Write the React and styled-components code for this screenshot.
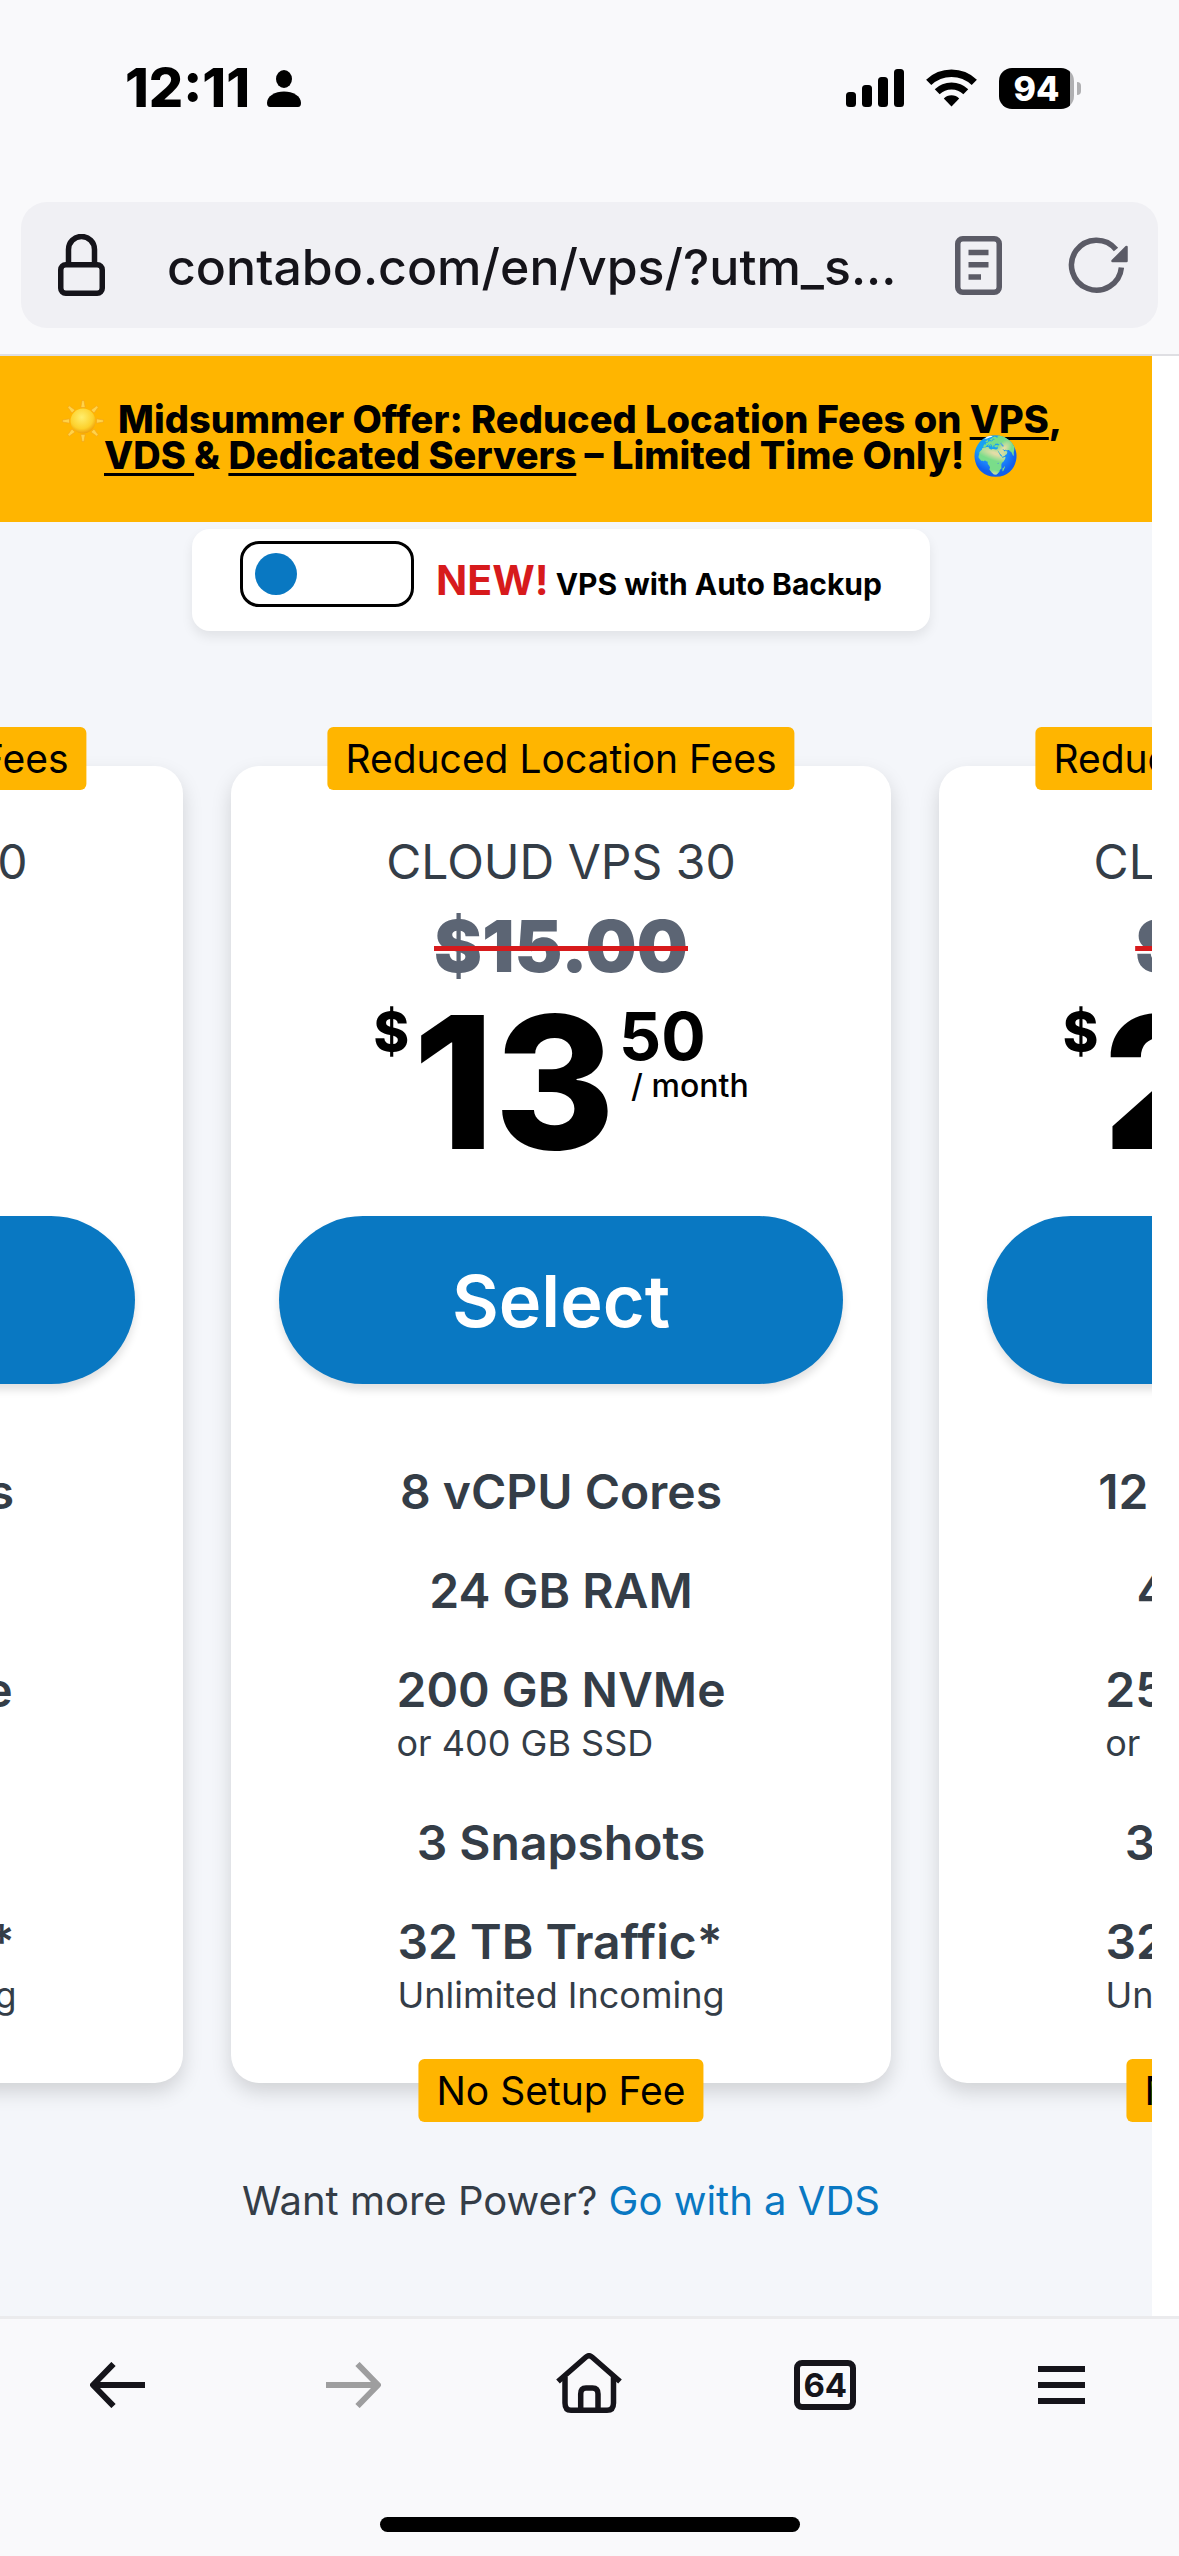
import React, { useState } from "react";
import styled, { createGlobalStyle } from "styled-components";

const color = {
  chrome: "#f9f9fb",
  field: "#f0f0f4",
  ink: "#15141a",
  muted: "#5b5b66",
  page: "#f4f6fa",
  yellow: "#ffb500",
  blue: "#0978c2",
  red: "#d71a1c",
  slate: "#343d47",
  oldPrice: "#5c6574",
};

const GlobalStyle = createGlobalStyle`
  *, *::before, *::after { box-sizing: border-box; }
  body {
    margin: 0;
    background: ${color.chrome};
    font-family: Inter, "Liberation Sans", sans-serif;
    color: #000;
  }
  button, input { font: inherit; color: inherit; }
  svg { display: block; flex: none; }
`;

const Screen = styled.div`
  display: flex;
  flex-direction: column;
  min-height: 100vh;
`;

/* Phone status bar */

const StatusBar = styled.div`
  display: flex;
  align-items: center;
  justify-content: space-between;
  height: 176px;
  padding: 0 98px 0 125px;
`;

const StatusGroup = styled.div`
  display: flex;
  align-items: center;
  gap: ${(p) => p.$gap}px;
`;

const Clock = styled.time`
  font-size: 54px;
  font-weight: 800;
  line-height: 60px;
`;

const Battery = styled.div`
  display: flex;
  align-items: center;
  gap: 3px;
`;

const BatteryLevel = styled.div`
  width: 75px;
  border-radius: 13px;
  background: linear-gradient(90deg, #000 95%, #b0b0b2 95%);
  color: #fff;
  font-size: 34px;
  font-weight: 800;
  line-height: 41px;
  text-align: center;
`;

const BatteryTip = styled.div`
  width: 4px;
  height: 13px;
  border-radius: 0 6px 6px 0;
  background: #b0b0b2;
`;

/* Browser address bar */

const AddressRow = styled.header`
  padding: 26px 21px;
  border-bottom: 2px solid #dfdfe3;
`;

const AddressField = styled.form`
  display: flex;
  align-items: center;
  height: 126px;
  padding: 0 30px 0 37px;
  border-radius: 26px;
  background: ${color.field};
`;

const AddressInput = styled.input`
  flex: 1;
  min-width: 0;
  margin: 0 36px 0 62px;
  padding: 3px 0 0;
  border: 0;
  outline: 0;
  background: none;
  color: ${color.ink};
  font-size: 50px;
  font-weight: 500;
  line-height: 64px;
`;

const FieldActions = styled.div`
  display: flex;
  align-items: center;
  gap: 66px;
`;

const IconButton = styled.button`
  display: flex;
  align-items: center;
  justify-content: center;
  padding: 0;
  border: 0;
  background: none;
  color: ${(p) => p.$tint || color.ink};
`;

/* Web page */

const Viewport = styled.div`
  display: flex;
  flex: 1;
  padding-right: 27px;
  background: #fff;
`;

const Page = styled.main`
  flex: 1;
  min-width: 0;
  overflow: hidden;
  background: ${color.page};
`;

const Banner = styled.p`
  margin: 0;
  padding: 45px 28px 49px 0;
  background: ${color.yellow};
  font-size: 38px;
  font-weight: 800;
  line-height: 36px;
  text-align: center;
  white-space: nowrap;
`;

const BannerLink = styled.a`
  color: inherit;
  text-decoration: underline;
  text-decoration-thickness: 3px;
  text-decoration-skip-ink: none;
  text-underline-offset: 4px;
`;

const Globe = styled.span`
  font-family: "Noto Color Emoji", sans-serif;
  font-size: 38px;
  font-weight: 400;
  line-height: 0;
`;

const SunDrawing = styled.svg`
  display: inline-block;
  margin: -10px 6px -10px 0;
  vertical-align: 1px;
`;

const Content = styled.div`
  display: flex;
  flex-direction: column;
  align-items: center;
  padding: 7px 30px 0 0;
`;

const BackupOption = styled.label`
  display: flex;
  align-items: flex-start;
  gap: 22px;
  padding: 12px 48px 4px;
  border-radius: 18px;
  background: #fff;
  box-shadow: 0 6px 12px rgba(0, 0, 0, 0.08);
  font-size: 30px;
  font-weight: 700;
  line-height: 86px;
  white-space: nowrap;
`;

const Switch = styled.input`
  appearance: none;
  display: flex;
  align-items: center;
  width: 174px;
  height: 66px;
  margin: 0;
  padding: 0 12px;
  border: 3px solid #000;
  border-radius: 19px;
  background: #fff;

  &::before {
    content: "";
    width: 42px;
    height: 42px;
    border-radius: 50%;
    background: ${color.blue};
  }

  &:checked {
    justify-content: flex-end;
  }
`;

const NewTag = styled.strong`
  color: ${color.red};
  font-size: 41px;
  font-weight: 700;
  line-height: 0;
`;

const Carousel = styled.div`
  display: flex;
  justify-content: center;
  gap: 48px;
  width: 100%;
  margin-top: 135px;
`;

const Card = styled.article`
  position: relative;
  display: flex;
  flex: none;
  flex-direction: column;
  width: 660px;
  padding: 64px 48px 57px;
  border-radius: 28px;
  background: #fff;
  box-shadow: 0 9px 20px rgba(0, 0, 0, 0.15);
  text-align: center;
`;

const Badge = styled.span`
  position: absolute;
  ${(p) => p.$edge}: -39px;
  left: 50%;
  transform: translateX(-50%);
  padding: 0 18px;
  border-radius: 6px;
  background: ${color.yellow};
  font-size: 39px;
  line-height: 63px;
  white-space: nowrap;
`;

const PlanName = styled.h2`
  margin: 0;
  color: ${color.slate};
  font-size: 48px;
  font-weight: 400;
  line-height: 64px;
`;

const OldPrice = styled.del`
  color: ${color.oldPrice};
  font-size: 72px;
  font-weight: 900;
  line-height: 104px;
  text-decoration: line-through ${color.red} 5px;
`;

const Price = styled.div`
  display: flex;
  justify-content: center;
  gap: 4px;
  height: 168px;
`;

const Currency = styled.span`
  font-size: 54px;
  font-weight: 800;
  line-height: 68px;
`;

const Whole = styled.span`
  font-size: 184px;
  font-weight: 800;
  line-height: 168px;
`;

const PriceSide = styled.span`
  display: flex;
  flex-direction: column;
  text-align: left;
`;

const Cents = styled.span`
  font-size: 66px;
  font-weight: 700;
  line-height: 76px;
`;

const Period = styled.span`
  padding-left: 12px;
  font-size: 32px;
  font-weight: 500;
  line-height: 24px;
`;

const SelectButton = styled.button`
  height: 168px;
  margin: 50px 0 78px;
  padding: 0;
  border: 0;
  border-radius: 84px;
  background: ${color.blue};
  box-shadow: 0 6px 8px rgba(0, 0, 0, 0.12);
  color: #fff;
  font-size: 72px;
  font-weight: 600;
`;

const Features = styled.ul`
  display: flex;
  flex-direction: column;
  align-items: center;
  gap: 39px;
  margin: 0;
  padding: 0;
  list-style: none;
  color: ${color.slate};
  text-align: left;
`;

const Feature = styled.li`
  font-size: 48px;
  font-weight: 600;
  line-height: 60px;
`;

const FeatureNote = styled.div`
  margin-bottom: 8px;
  font-size: 36px;
  font-weight: 400;
  line-height: 46px;
`;

const MorePower = styled.p`
  margin: 88px 0 0;
  color: ${color.slate};
  font-size: 40px;
  line-height: 60px;
`;

const TextLink = styled.a`
  color: ${color.blue};
  text-decoration: none;
`;

/* Browser toolbar */

const BottomBar = styled.footer`
  display: flex;
  flex-direction: column;
  align-items: center;
  padding-bottom: 24px;
  border-top: 3px solid #ebebed;
`;

const Toolbar = styled.nav`
  display: grid;
  grid-template-columns: repeat(5, 1fr);
  width: 100%;
  height: 132px;
`;

const TabCount = styled.span`
  width: 62px;
  border: 6px solid ${color.ink};
  border-radius: 8px;
  font-size: 33px;
  font-weight: 700;
  line-height: 38px;
`;

const HomeIndicator = styled.div`
  width: 420px;
  height: 15px;
  margin-top: 66px;
  border-radius: 8px;
  background: #000;
`;

const PersonIcon = () => (
  <svg width="34" height="37" viewBox="0 0 34 37" fill="#000" aria-hidden="true">
    <ellipse cx="17" cy="9" rx="8" ry="9" />
    <path d="M3 37Q0 37 0 33C0 26 8 21.500 17 21.500S34 26 34 33Q34 37 31 37Z" />
  </svg>
);

const SignalIcon = () => (
  <svg width="58" height="38" viewBox="0 0 58 38" fill="#000" aria-hidden="true">
    <rect x="0" y="23" width="10" height="15" rx="3.500" />
    <rect x="16" y="16" width="10" height="22" rx="3.500" />
    <rect x="32" y="8" width="10" height="30" rx="3.500" />
    <rect x="48" y="0" width="10" height="38" rx="3.500" />
  </svg>
);

const WifiIcon = () => (
  <svg width="51" height="38" viewBox="0 0 51 38" fill="none" stroke="#000" aria-hidden="true">
    <path d="M2.700 13.400A33 33 0 0 1 48.300 13.400" strokeWidth="7.500" />
    <path d="M11.200 22.700A20.500 20.500 0 0 1 39.800 22.700" strokeWidth="7" />
    <path d="M25.500 37.500L17.800 29.500A11 11 0 0 1 33.200 29.500Z" fill="#000" stroke="none" />
  </svg>
);

const LockIcon = () => (
  <svg width="47" height="62" viewBox="0 0 47 62" fill="none" stroke={color.ink} strokeWidth="5.500" aria-hidden="true">
    <rect x="2.750" y="30.750" width="41.500" height="28.500" rx="5" />
    <path d="M10.500 31V15.500a13 13 0 0 1 26 0V31" />
  </svg>
);

const ReaderIcon = () => (
  <svg width="47" height="59" viewBox="0 0 47 59" fill="none" stroke="currentColor" strokeWidth="5.500" aria-hidden="true">
    <rect x="2.750" y="2.750" width="41.500" height="53.500" rx="5" />
    <path d="M13.500 16.500h20M13.500 28.700h20M13.500 41h12.500" />
  </svg>
);

const ReloadIcon = () => (
  <svg width="60" height="58" viewBox="0 0 60 58" fill="none" stroke="currentColor" strokeWidth="5.500" aria-hidden="true">
    <path d="M53.400 31.500A25 25 0 1 1 48 13.500" />
    <path d="M58.500 11V25H44.500Z" fill="currentColor" strokeWidth="2.500" strokeLinejoin="round" />
  </svg>
);

const SunIcon = () => (
  <SunDrawing width="42" height="42" viewBox="0 0 42 42" role="img" aria-label="Sun">
    <defs>
      <radialGradient id="sun" cx="45%" cy="35%" r="65%">
        <stop offset="0" stopColor="#ffee6e" />
        <stop offset="0.700" stopColor="#fdd12c" />
        <stop offset="1" stopColor="#ee9f0c" />
      </radialGradient>
    </defs>
    {[0, 45, 90, 135, 180, 225, 270, 315].map((angle) => (
      <path key={angle} d="M18.800 7.500L20 0.500H22L23.200 7.500Z" fill="#ffd34a" stroke="#f0a31c" strokeWidth="0.600" transform={`rotate(${angle} 21 21)`} />
    ))}
    <circle cx="21" cy="21" r="12.500" fill="url(#sun)" />
  </SunDrawing>
);

const BackIcon = () => (
  <svg width="55" height="46" viewBox="0 0 55 46" fill="none" stroke="currentColor" strokeWidth="6" strokeLinejoin="round" aria-hidden="true">
    <path d="M55 23H3M23.500 2L3 23L23.500 44" />
  </svg>
);

const ForwardIcon = () => (
  <svg width="55" height="46" viewBox="0 0 55 46" fill="none" stroke="currentColor" strokeWidth="6" strokeLinejoin="round" aria-hidden="true">
    <path d="M0 23H52M31.500 2L52 23L31.500 44" />
  </svg>
);

const HomeIcon = () => (
  <svg width="66" height="64" viewBox="0 0 66 64" fill="none" stroke="currentColor" strokeWidth="5.500" strokeLinejoin="round" aria-hidden="true">
    <path d="M2 28.500L30 4Q33 1.500 36 4L64 28.500" />
    <path d="M9 24V50Q9 57.300 15 57.300H51Q57.500 57.300 57.500 50V24" />
    <path d="M24.700 57V41Q24.700 35 30 35H36.500Q42 35 42 41V57" />
  </svg>
);

const MenuIcon = () => (
  <svg width="47" height="38" viewBox="0 0 47 38" fill="none" stroke="currentColor" strokeWidth="6" aria-hidden="true">
    <path d="M0 3H47M0 19H47M0 35H47" />
  </svg>
);

const plans = [
  {
    name: "CLOUD VPS 20",
    old: "$8.00",
    whole: "7",
    cents: "20",
    features: [
      ["6 vCPU Cores"],
      ["12 GB RAM"],
      ["100 GB NVMe", "or 200 GB SSD"],
      ["2 Snapshots"],
      ["32 TB Traffic*", "Unlimited Incoming"],
    ],
  },
  {
    name: "CLOUD VPS 30",
    old: "$15.00",
    whole: "13",
    cents: "50",
    features: [
      ["8 vCPU Cores"],
      ["24 GB RAM"],
      ["200 GB NVMe", "or 400 GB SSD"],
      ["3 Snapshots"],
      ["32 TB Traffic*", "Unlimited Incoming"],
    ],
  },
  {
    name: "CLOUD VPS 40",
    old: "$29.00",
    whole: "26",
    cents: "10",
    features: [
      ["12 vCPU Cores"],
      ["48 GB RAM"],
      ["250 GB NVMe", "or 500 GB SSD"],
      ["3 Snapshots"],
      ["32 TB Traffic*", "Unlimited Incoming"],
    ],
  },
];

function PlanCard({ plan }) {
  return (
    <Card>
      <Badge $edge="top">Reduced Location Fees</Badge>
      <PlanName>{plan.name}</PlanName>
      <OldPrice>{plan.old}</OldPrice>
      <Price>
        <Currency>$</Currency>
        <Whole>{plan.whole}</Whole>
        <PriceSide>
          <Cents>{plan.cents}</Cents>
          <Period>/ month</Period>
        </PriceSide>
      </Price>
      <SelectButton type="button">Select</SelectButton>
      <Features>
        {plan.features.map(([label, note]) => (
          <Feature key={label}>
            {label}
            {note && <FeatureNote>{note}</FeatureNote>}
          </Feature>
        ))}
      </Features>
      <Badge $edge="bottom">No Setup Fee</Badge>
    </Card>
  );
}

export default function App() {
  const [backup, setBackup] = useState(false);

  return (
    <Screen>
      <GlobalStyle />
      <StatusBar>
        <StatusGroup $gap={17}>
          <Clock>12:11</Clock>
          <PersonIcon />
        </StatusGroup>
        <StatusGroup $gap={22}>
          <SignalIcon />
          <WifiIcon />
          <Battery>
            <BatteryLevel>94</BatteryLevel>
            <BatteryTip />
          </Battery>
        </StatusGroup>
      </StatusBar>

      <AddressRow>
        <AddressField onSubmit={(e) => e.preventDefault()}>
          <LockIcon />
          <AddressInput type="text" aria-label="Address" defaultValue="contabo.com/en/vps/?utm_s..." />
          <FieldActions>
            <IconButton type="button" aria-label="Reader view" $tint={color.muted}>
              <ReaderIcon />
            </IconButton>
            <IconButton type="button" aria-label="Reload" $tint={color.muted}>
              <ReloadIcon />
            </IconButton>
          </FieldActions>
        </AddressField>
      </AddressRow>

      <Viewport>
        <Page>
          <Banner>
            <SunIcon /> Midsummer Offer: Reduced Location Fees on{" "}
            <BannerLink href="#vps">VPS</BannerLink>,
            <br />
            <BannerLink href="#vds">VDS </BannerLink>&amp;{" "}
            <BannerLink href="#dedicated">Dedicated Servers</BannerLink> – Limited Time Only!{" "}
            <Globe>🌍</Globe>
          </Banner>

          <Content>
            <BackupOption>
              <Switch
                type="checkbox"
                role="switch"
                checked={backup}
                onChange={(e) => setBackup(e.target.checked)}
              />
              <span>
                <NewTag>NEW!</NewTag> VPS with Auto Backup
              </span>
            </BackupOption>

            <Carousel>
              {plans.map((plan) => (
                <PlanCard key={plan.name} plan={plan} />
              ))}
            </Carousel>

            <MorePower>
              Want more Power? <TextLink href="#vds">Go with a VDS</TextLink>
            </MorePower>
          </Content>
        </Page>
      </Viewport>

      <BottomBar>
        <Toolbar aria-label="Browser">
          <IconButton type="button" aria-label="Back">
            <BackIcon />
          </IconButton>
          <IconButton type="button" aria-label="Forward" $tint="#9e9e9f">
            <ForwardIcon />
          </IconButton>
          <IconButton type="button" aria-label="Home">
            <HomeIcon />
          </IconButton>
          <IconButton type="button" aria-label="Tabs">
            <TabCount>64</TabCount>
          </IconButton>
          <IconButton type="button" aria-label="Menu">
            <MenuIcon />
          </IconButton>
        </Toolbar>
        <HomeIndicator />
      </BottomBar>
    </Screen>
  );
}
